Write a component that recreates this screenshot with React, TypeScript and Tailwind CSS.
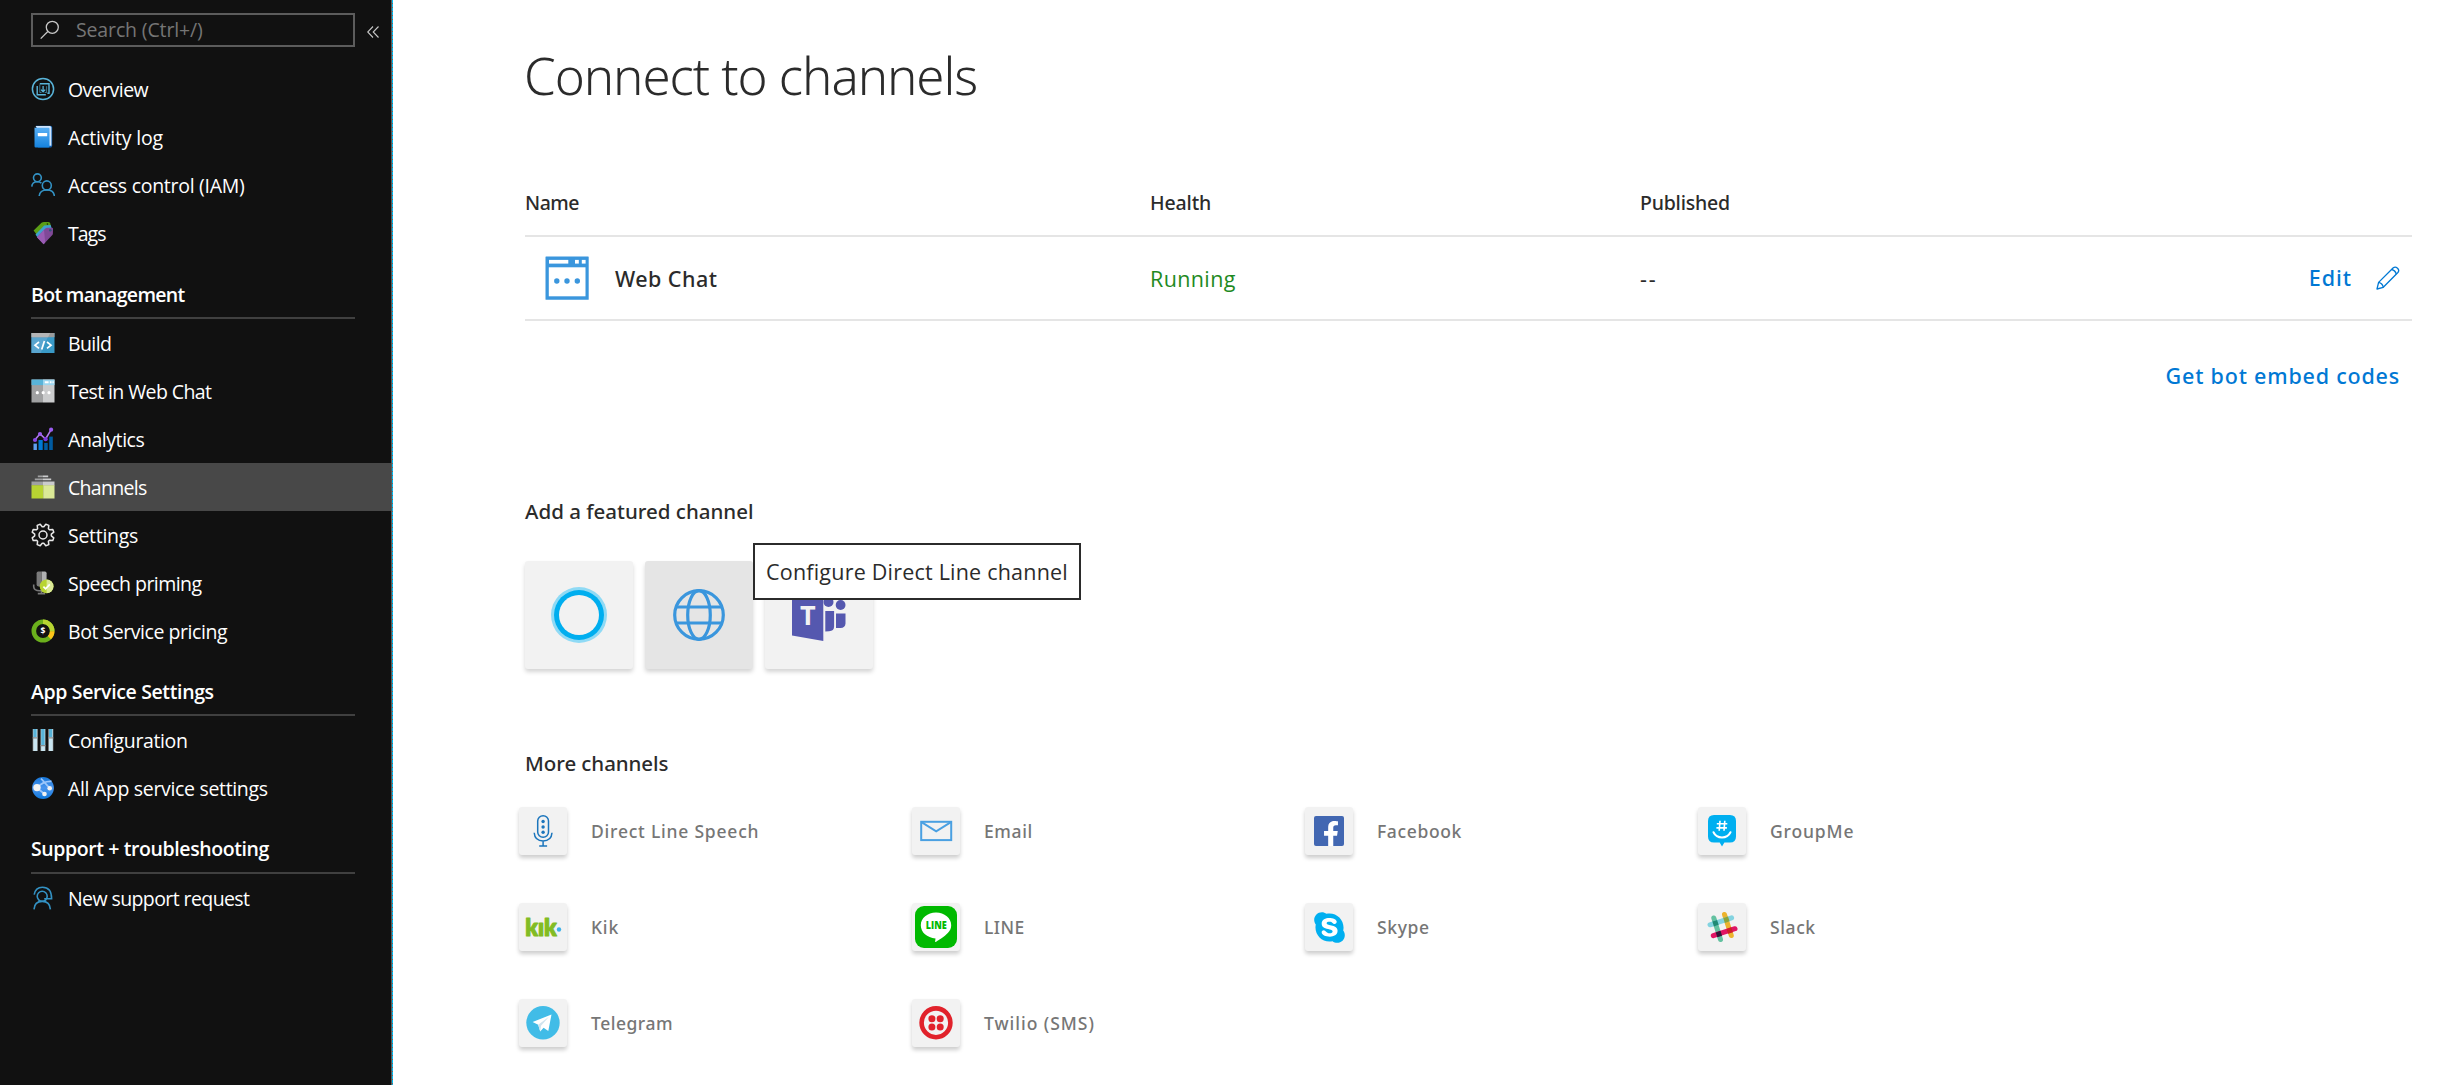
import type { ReactNode } from "react";
import { FaFacebookF, FaSkype } from "react-icons/fa";

type NavEntry = { label: string; tracking: string; icon: ReactNode; active?: boolean };
type Channel = { label: string; tracking: string; icon: ReactNode };

/* ---------- sidebar icons, drawn on a 24 unit grid ---------- */

const OverviewIcon = () => (
  <svg viewBox="0 0 24 24" className="size-6" fill="none" stroke="#59b4d9">
    <circle cx="12" cy="12" r="10.6" strokeWidth="1.5" />
    <path d="M8.8 6.8H18v9.4h-1.6M6.2 9v8.7h8.6" strokeWidth="1.4" />
    <path d="M8.8 7.5v8h1.7M13.7 15.5h1.9V9.2" strokeWidth="1" opacity=".6" />
    <path d="M12.1 9v5.6M10 12.6l2.1 2.2 2.1-2.2" strokeWidth="1.3" />
  </svg>
);

const ActivityIcon = () => (
  <svg viewBox="0 0 24 24" className="size-6">
    <defs>
      <linearGradient id="book" x1="0" y1="0" x2="0" y2="1">
        <stop offset="0" stopColor="#5ab0f5" />
        <stop offset="1" stopColor="#1583de" />
      </linearGradient>
    </defs>
    <path d="M5 .8h14.5q1.7 0 1.7 1.6v17.8q0 1.4-1 2.2H7z" fill="#0f5fb0" />
    <path d="M4.5 1h14.3q1.6 0 1.6 1.5v18.3H18L6 3z" fill="#cfe3fb" />
    <path d="M3.5 2.4Q4 2.8 5 2.8h12.4q1.1 0 1.1 1v17.4q0 1.2-1.1 1.2H4.7q-1.2 0-1.2-1.2z" fill="url(#book)" />
    <rect x="6.8" y="8" width="9.4" height="3.2" rx=".4" fill="#fff" />
  </svg>
);

const AccessIcon = () => (
  <svg viewBox="0 0 24 24" className="size-6" fill="none" stroke="#3392c4" strokeWidth="1.6">
    <circle cx="6.4" cy="4.8" r="3.9" />
    <path d="M.8 13.6C1 10 3.2 8.7 6.4 8.7c1.7 0 3 .4 4 1.4" />
    <circle cx="15.8" cy="12.4" r="4.5" />
    <path d="M8.2 23c.4-4 3.3-6 7.6-6s7.2 2 7.6 6" />
  </svg>
);

const TagsIcon = () => (
  <svg viewBox="0 0 24 24" className="size-6">
    <path d="M2.6 9.6 10.500 1.800q1-.9 2.500-.9h4.500q1.600 0 1.800 1.500l.7 3L6.600 15z" fill="#5b9e16" />
    <path d="M4.5 13.4 13.2 4.6l6.400-.5 1.400 4L7.6 18z" fill="#3fa0cf" />
    <path d="M6 16.300 14.300 7.600q.8-.8 2-.8l4.700-.1q1 .1 1 1l-.1 4.700q0 1-.8 1.900l-8.500 8.900z" fill="#804998" />
    <path d="M6 16.300 13 9l1.200 12.600-1.600 1.600z" fill="#9a5cb4" />
    <circle cx="19.300" cy="9.200" r="1.300" fill="#31547a" />
    <circle cx="16.400" cy="3.100" r=".8" fill="#1a3506" />
  </svg>
);

const BuildIcon = () => (
  <svg viewBox="0 0 24 24" className="size-6">
    <rect x=".5" y="2" width="23" height="20" fill="#3999c6" />
    <path d="M.5 6.2h16.3L9.7 22H.5z" fill="#59a5cf" />
    <rect x=".5" y="2" width="23" height="4.2" fill="#9a9b9c" />
    <path d="M.5 2h18.6l-2 4.2H.5z" fill="#b4b5b6" />
    <path d="M8 11l-4 3.2 4 3.2M16 11l4 3.2-4 3.2M13.4 10l-2.7 8.4" fill="none" stroke="#fff" strokeWidth="1.7" />
  </svg>
);

const WebTestIcon = () => (
  <svg viewBox="0 0 24 24" className="size-6">
    <rect x=".5" y=".5" width="11.5" height="23" fill="#a0a1a2" />
    <rect x="12" y=".5" width="11.5" height="23" fill="#cbcccd" />
    <rect x=".5" y=".5" width="11.5" height="5.6" fill="#59b4d9" />
    <rect x="12" y=".5" width="11.5" height="5.6" fill="#9bd6ef" />
    <path d="M13.8 3.3h3.8M18.8 3.3h1.7M21.5 3.3h1.2" stroke="#fff" strokeWidth="1.9" />
    <circle cx="6.3" cy="13.7" r="1.6" fill="#fff" />
    <circle cx="12.2" cy="13.7" r="1.6" fill="#fff" />
    <circle cx="18" cy="13.7" r="1.6" fill="#fff" />
  </svg>
);

const AnalyticsIcon = () => (
  <svg viewBox="0 0 24 24" className="size-6">
    <rect x="2.5" y="16.6" width="3.4" height="6.4" fill="#5ea0ef" />
    <rect x="7.5" y="13" width="4.2" height="10" fill="#0078d4" />
    <rect x="13.2" y="16" width="3.5" height="7" fill="#005ba1" />
    <rect x="18.2" y="9.6" width="3.6" height="13.4" fill="#005ba1" />
    <path d="M3.8 13 9 6.8l5.6 5.2L20 2.8" fill="none" stroke="#b27ceb" strokeWidth="1.6" />
    <circle cx="4" cy="13" r="2.1" fill="#8a48e8" />
    <circle cx="9" cy="7" r="2.1" fill="#9a5cf0" />
    <circle cx="14.6" cy="12.2" r="2.1" fill="#7b35e0" />
    <circle cx="20.1" cy="2.7" r="2.1" fill="#9a5cf0" />
  </svg>
);

const ChannelsIcon = () => (
  <svg viewBox="0 0 24 24" className="size-6">
    <path d="M6.8.4H12v1.8H6.8zM3.8 3.4H12v1.9H3.8zM.5 6.6H12v4H.5z" fill="#a0a1a2" />
    <path d="M12 .4h5.2v1.8H12zM12 3.4h8.2v1.9H12zM12 6.6h11.5v4H12z" fill="#cbcccd" />
    <rect x=".5" y="10.2" width="11.7" height="13.3" fill="#b8d432" />
    <rect x="12.2" y="10.2" width="11.3" height="13.3" fill="#dbe996" />
  </svg>
);

const SettingsIcon = () => (
  <svg viewBox="0 0 24 24" className="size-6" fill="none" stroke="#e8e8e8" strokeWidth="1.5" strokeLinejoin="round">
    <path d="M9.2 1.2l2 2.6h1.6l2-2.6 3 1.2-.4 3.3 1.1 1.1 3.3-.4 1 2.8-2.5 2v1.6l2.5 2-1 2.8-3.3-.4-1.1 1.1.4 3.3-3 1.2-2-2.6h-1.6l-2 2.6-3-1.2.4-3.3-1.1-1.1-3.3.4-1-2.8 2.5-2v-1.6l-2.5-2 1-2.8 3.3.4 1.1-1.1-.4-3.3z" />
    <circle cx="12" cy="12" r="4" />
  </svg>
);

const SpeechIcon = () => (
  <svg viewBox="0 0 24 24" className="size-6">
    <path d="M5.6 2.2Q5.6.6 7.2.6h3.6v15H7.6q-2 0-2-2z" fill="#7a7a7a" />
    <path d="M10.8.6H14q1.6 0 1.6 1.6V15h-4.8z" fill="#b0b1b2" />
    <path d="M2.7 13.4v2.3q.3 4 6 4h3M10.5 19.5V23M6.8 22.6h7.4" fill="none" stroke="#7a7a7a" strokeWidth="1.6" />
    <circle cx="15.6" cy="15.4" r="6.9" fill="#b8d432" />
    <path d="M15.6 8.5a6.9 6.9 0 0 1 0 13.8z" fill="#dbe996" />
    <path d="M12.4 15.6l2.2 2.2 4.2-4.4" fill="none" stroke="#fff" strokeWidth="1.7" />
  </svg>
);

const PricingIcon = () => (
  <svg viewBox="0 0 24 24" className="size-6">
    <circle cx="12" cy="12" r="9.2" fill="none" stroke="#6bb01c" strokeWidth="4.6" />
    <path d="M12 2.8a9.2 9.2 0 0 1 9.2 9.4" fill="none" stroke="#b8d432" strokeWidth="4.6" />
    <path d="M21.2 12.2a9.2 9.2 0 0 1-2.8 6.4" fill="none" stroke="#fcc419" strokeWidth="4.6" />
    <text x="12" y="15.2" textAnchor="middle" fontSize="8.5" fontWeight="700" fontFamily="Open Sans" fill="#fff">$</text>
  </svg>
);

const ConfigIcon = () => (
  <svg viewBox="0 0 24 24" className="size-6">
    <path d="M1.7 1h5v22h-5zM9.5 1h5v22h-5zM17.3 1h5v22h-5z" fill="#a0a1a2" />
    <path d="M2.4 1h3.7v22H2.4zM10.2 1h3.7v22h-3.7zM18 1h3.7v22H18z" fill="#c9e6f2" />
    <path d="M2.4 1h3.2v8H2.4zM10.2 1h3.4v16h-3.4zM18 1h3.2v8H18z" fill="#59b4d9" />
    <path d="M1.7 9.8h5M9.5 17.7h5M17.3 9.8h5" stroke="#8c8d8e" strokeWidth="1.2" />
  </svg>
);

const GlobeNodesIcon = () => (
  <svg viewBox="0 0 24 24" className="size-6">
    <defs>
      <linearGradient id="globe" x1="0" y1="0" x2="0" y2="1">
        <stop offset="0" stopColor="#1676d8" />
        <stop offset=".5" stopColor="#4a95ee" />
        <stop offset="1" stopColor="#0f78dc" />
      </linearGradient>
    </defs>
    <circle cx="12" cy="12" r="10.9" fill="url(#globe)" />
    <path d="M6.5 11.5Q12 5 20.5 5.4M10 2.5l8.4 9.3M6 12l7.6 6" fill="none" stroke="#9cc6fa" strokeWidth="1.8" />
    <circle cx="6" cy="11.6" r="3.7" fill="#f2f2f2" />
    <circle cx="18.7" cy="12.3" r="2.3" fill="#f2f2f2" />
    <circle cx="13.5" cy="18" r="2.3" fill="#f2f2f2" />
  </svg>
);

const SupportIcon = () => (
  <svg viewBox="0 0 24 24" className="size-6" fill="none" stroke="#3392c4" strokeWidth="1.6">
    <circle cx="11.2" cy="10.3" r="5" />
    <path d="M3.2 8.6C4 3.8 7 1.2 11.4 1.2c5.6 0 9.2 4 9.2 11.5h-7.4" />
    <path d="M3 23.4c.3-4.900 3.300-8 8.200-8s7.900 3.100 8.200 8" />
  </svg>
);

/* ---------- channel icons ---------- */

const WebChatIcon = () => (
  <svg viewBox="0 0 44 44" className="size-11">
    <rect x=".5" y=".5" width="43.200" height="43.200" rx=".5" fill="#3a96dd" />
    <rect x="4" y="3.900" width="19.300" height="3.700" fill="#fff" />
    <rect x="30" y="3.900" width="3.800" height="3.700" fill="#fff" />
    <rect x="36.800" y="3.900" width="3.800" height="3.700" fill="#fff" />
    <rect x="3.800" y="11.300" width="36.700" height="29" fill="#fff" />
    <circle cx="11.800" cy="25" r="2.700" fill="#3a96dd" />
    <circle cx="22" cy="25" r="2.700" fill="#3a96dd" />
    <circle cx="32.300" cy="25" r="2.700" fill="#3a96dd" />
  </svg>
);

const PencilIcon = () => (
  <svg viewBox="0 0 24 24" className="size-6" fill="none" stroke="#0078d4" strokeWidth="1.3" strokeLinejoin="round">
    <path d="M1 23l1.600-6.600L17.300 1.800q2-1.600 4.200.4t.4 4.300L7.300 21.300z" />
    <path d="M2.600 16.400q3.800.8 4.700 4.900M15.600 3.500q3.800.8 4.700 4.700" />
  </svg>
);

const CortanaIcon = () => (
  <svg viewBox="0 0 56 56" className="size-14">
    <circle cx="28" cy="28" r="28" fill="#8fdaf5" />
    <circle cx="28" cy="28" r="25" fill="#00aeef" />
    <circle cx="28" cy="28" r="20" fill="#f2f2f2" />
  </svg>
);

const DirectLineIcon = () => (
  <svg viewBox="0 0 52 52" className="size-[52px]" fill="none" stroke="#3a96dd" strokeWidth="3.2">
    <circle cx="26" cy="26" r="24.3" />
    <ellipse cx="26" cy="26" rx="11.3" ry="24.3" />
    <path d="M3.500 18h45M3.500 34h45" />
  </svg>
);

const TeamsIcon = () => (
  <svg viewBox="0 0 54 52" className="h-[52px] w-[54px]" fill="#5558af">
    <path d="M0 5.500 31.300 0v52L0 46.500z" />
    <circle cx="36.500" cy="13" r="5" />
    <circle cx="48.600" cy="16" r="4.900" />
    <path d="M33.300 22h8.800v15.500q0 4.500-5 4.700l-3.800.3zM44 24.500h9.500v10q-.3 4.300-5 4.500H44z" />
    <text x="15.700" y="35.600" textAnchor="middle" fontFamily="Open Sans" fontWeight="700" fontSize="27" fill="#f2f2f2">T</text>
  </svg>
);

const MicIcon = () => (
  <svg viewBox="0 0 48 48" className="size-12" fill="none" stroke="#1b75bc" strokeWidth="1.5">
    <rect x="18.700" y="8.700" width="10.800" height="21.600" rx="5.400" />
    <path d="M15.200 25.800q.6 8.200 8.900 8.200t8.900-8.200M24.100 34v5M20.200 39.100h7.900" />
    <g fill="#1b75bc" stroke="none">
      <circle cx="24.100" cy="14.500" r="1.700" />
      <circle cx="24.100" cy="20" r="1.700" />
      <circle cx="24.100" cy="25.300" r="1.700" />
    </g>
  </svg>
);

const EmailIcon = () => (
  <svg viewBox="0 0 48 48" className="size-12" fill="none" stroke="#4aa0e2" strokeWidth="2">
    <rect x="9.200" y="14.800" width="30" height="18.300" />
    <path d="M9.500 15.200l14.700 9.200 14.700-9.200" />
  </svg>
);

const FacebookIcon = () => (
  <span className="relative block size-[30px] overflow-hidden rounded-[2px] bg-[#4267b2]">
    <FaFacebookF className="absolute right-0 bottom-[-1px] size-[26px] text-white" />
  </span>
);

const GroupMeIcon = () => (
  <svg viewBox="0 0 48 48" className="size-12">
    <path d="M16 8h16q6 0 6 6v15.500q0 6-6 6h-5.600L24 39.500l-2.300-4H16q-6 0-6-6V14q0-6 6-6z" fill="#00aff0" />
    <path d="M22 13.700l-.8 10M26.800 13.700l-.8 10M18.800 16.700h10.500M18.400 20.900h10.500" stroke="#fff" strokeWidth="1.6" />
    <path d="M15.500 25.200q2.500 5.200 8.500 5.200t8.500-5.200" fill="none" stroke="#fff" strokeWidth="2" strokeLinecap="round" />
  </svg>
);

const KikIcon = () => (
  <svg viewBox="0 0 48 48" className="size-12">
    <text x="6.200" y="33.200" textLength="31.500" lengthAdjust="spacingAndGlyphs" fontFamily="Lato" fontWeight="800" fontSize="23.500" fill="#82bc23" stroke="#82bc23" strokeWidth="1" strokeLinejoin="round">kık</text>
    <circle cx="40" cy="26.500" r="2.200" fill="#3eb1e8" />
  </svg>
);

const LineIcon = () => (
  <svg viewBox="0 0 48 48" className="size-12">
    <rect x="3" y="3" width="42" height="42" rx="9" fill="#00b900" />
    <path d="M24 9.600c8.500 0 15.200 5.600 15.200 12.600 0 3-1.200 5.600-3.400 7.900-3.200 3.600-9.600 7.500-11.600 8.600-1 .5-1.100 0-1-.8l.3-2.500c-8.400-.7-14.700-6-14.700-13.200 0-7 6.700-12.600 15.200-12.600z" fill="#fff" />
    <text x="24.200" y="26.200" textAnchor="middle" textLength="21" lengthAdjust="spacingAndGlyphs" fontFamily="Open Sans" fontWeight="800" fontSize="10" fill="#00b900">LINE</text>
  </svg>
);

const SkypeIcon = () => (
  <span className="flex size-[26px] items-center justify-center rounded-full bg-white">
    <FaSkype className="size-[35px] shrink-0 text-[#00aff0]" />
  </span>
);

const SlackIcon = () => (
  <svg viewBox="0 0 48 48" className="size-12" fill="none" strokeWidth="5" strokeLinecap="round">
    <path d="M26.500 11.500l6.800 21" stroke="#ecb32d" />
    <path d="M15.800 15l6.700 21.500" stroke="#63c1a0" />
    <path d="M12 21.800l21.600-7" stroke="#83d3e0" />
    <path d="M15.300 32.700l21.700-7" stroke="#e01563" />
    <g strokeLinecap="butt">
      <path d="M16.700 17.700l1.600 4.900" stroke="#1f8a74" />
      <path d="M27.600 14.200l1.600 4.900" stroke="#8aa33a" />
      <path d="M20.100 28.600l1.600 4.900" stroke="#33183a" />
      <path d="M30.900 25.100l1.600 4.900" stroke="#cc2027" />
    </g>
  </svg>
);

const TelegramIcon = () => (
  <svg viewBox="0 0 48 48" className="size-12">
    <circle cx="24" cy="23.800" r="16.700" fill="#41bce7" />
    <path d="M32.500 15.500 13.600 23l5.600 2.800 2 6.700 3.400-3.700 4.700 3.200z" fill="#fff" />
    <path d="M19.200 25.800 30 17.800l-8 9-.8 5.700z" fill="#cfe3ee" />
  </svg>
);

const TwilioIcon = () => (
  <svg viewBox="0 0 48 48" className="size-12" fill="#e1222b">
    <circle cx="24" cy="23.800" r="14.400" fill="none" stroke="#e1222b" strokeWidth="4.600" />
    <circle cx="19.900" cy="19.700" r="3.500" />
    <circle cx="28.200" cy="19.700" r="3.500" />
    <circle cx="19.900" cy="28" r="3.500" />
    <circle cx="28.200" cy="28" r="3.500" />
  </svg>
);

/* ---------- data ---------- */

const general: NavEntry[] = [
  { label: "Overview", tracking: "tracking-[-0.56px]", icon: <OverviewIcon /> },
  { label: "Activity log", tracking: "tracking-[-0.2px]", icon: <ActivityIcon /> },
  { label: "Access control (IAM)", tracking: "tracking-[-0.28px]", icon: <AccessIcon /> },
  { label: "Tags", tracking: "tracking-[-1px]", icon: <TagsIcon /> },
];

const botManagement: NavEntry[] = [
  { label: "Build", tracking: "tracking-[-0.6px]", icon: <BuildIcon /> },
  { label: "Test in Web Chat", tracking: "tracking-[-0.6px]", icon: <WebTestIcon /> },
  { label: "Analytics", tracking: "tracking-[-0.44px]", icon: <AnalyticsIcon /> },
  { label: "Channels", tracking: "tracking-[-0.7px]", icon: <ChannelsIcon />, active: true },
  { label: "Settings", tracking: "tracking-[-0.29px]", icon: <SettingsIcon /> },
  { label: "Speech priming", tracking: "tracking-[-0.55px]", icon: <SpeechIcon /> },
  { label: "Bot Service pricing", tracking: "tracking-[-0.45px]", icon: <PricingIcon /> },
];

const appService: NavEntry[] = [
  { label: "Configuration", tracking: "tracking-[-0.37px]", icon: <ConfigIcon /> },
  { label: "All App service settings", tracking: "tracking-[-0.33px]", icon: <GlobeNodesIcon /> },
];

const support: NavEntry[] = [
  { label: "New support request", tracking: "tracking-[-0.59px]", icon: <SupportIcon /> },
];

const channels: Channel[] = [
  { label: "Direct Line Speech", tracking: "tracking-[0.78px]", icon: <MicIcon /> },
  { label: "Email", tracking: "tracking-[0.61px]", icon: <EmailIcon /> },
  { label: "Facebook", tracking: "tracking-[0.63px]", icon: <FacebookIcon /> },
  { label: "GroupMe", tracking: "tracking-[0.85px]", icon: <GroupMeIcon /> },
  { label: "Kik", tracking: "tracking-[0.8px]", icon: <KikIcon /> },
  { label: "LINE", tracking: "tracking-[0.5px]", icon: <LineIcon /> },
  { label: "Skype", tracking: "tracking-[0.63px]", icon: <SkypeIcon /> },
  { label: "Slack", tracking: "tracking-[0.6px]", icon: <SlackIcon /> },
  { label: "Telegram", tracking: "tracking-[0.52px]", icon: <TelegramIcon /> },
  { label: "Twilio (SMS)", tracking: "tracking-[0.97px]", icon: <TwilioIcon /> },
];

/* ---------- pieces ---------- */

function NavList({ entries }: { entries: NavEntry[] }) {
  return (
    <ul>
      {entries.map((e) => (
        <li key={e.label} className={`flex h-12 items-center gap-[13px] pl-[31px] ${e.active ? "bg-[#484848]" : ""}`}>
          <span className="flex size-6 shrink-0 items-center justify-center">{e.icon}</span>
          <span className={`pt-0.5 text-[19.5px] whitespace-nowrap text-white ${e.tracking}`}>{e.label}</span>
        </li>
      ))}
    </ul>
  );
}

function NavHeading({ label, className }: { label: string; className: string }) {
  return (
    <h2 className={`mr-[36px] ml-[31px] border-b-2 border-[#404040] text-[19.5px] font-semibold whitespace-nowrap text-white ${className}`}>
      {label}
    </h2>
  );
}

function Sidebar() {
  return (
    <aside className="flex h-full w-[393px] shrink-0 font-['Open_Sans',sans-serif]">
      <div className="w-[391px] bg-[#111111]">
        <div className="flex items-center pt-[13px] pl-[31px]">
          <div className="flex h-[34px] w-[324px] items-center border-2 border-[#5c5c5c] pl-[7px]">
            <svg viewBox="0 0 20 20" className="size-5" fill="none" stroke="#c8c8c8" strokeWidth="1.300">
              <circle cx="12.300" cy="7.300" r="6" />
              <path d="M7.800 11.500.700 18.600" />
            </svg>
            <span className="pl-4 text-[19.5px] leading-[26px] tracking-[-0.14px] text-[#757575]">Search (Ctrl+/)</span>
          </div>
          <svg viewBox="0 0 12 12" className="mt-1 ml-3 size-3" fill="none" stroke="#c8c8c8" strokeWidth="1.100">
            <path d="M6 .5.700 6 6 11.500M11.500.5 6.200 6l5.300 5.500" />
          </svg>
        </div>
        <nav className="pt-[18px]">
          <NavList entries={general} />
          <NavHeading label="Bot management" className="h-[62px] pt-[2px] leading-[71px] tracking-[-0.68px]" />
          <NavList entries={botManagement} />
          <NavHeading label="App Service Settings" className="h-[61px] pt-[2px] leading-[70px] tracking-[-0.36px]" />
          <NavList entries={appService} />
          <NavHeading label="Support + troubleshooting" className="h-[62px] pt-[2px] leading-[70px] tracking-[-0.4px]" />
          <NavList entries={support} />
        </nav>
      </div>
      <div className="w-px bg-[#5a5a5a]" />
      <div className="w-px bg-[repeating-linear-gradient(to_bottom,#00bcf2_0_3px,#6b6b6b_3px_4px)]" />
    </aside>
  );
}

function Tile({ active, children }: { active?: boolean; children: ReactNode }) {
  return (
    <div className={`relative flex size-[108px] items-center justify-center rounded-[3px] shadow-[0_3px_4px_rgba(0,0,0,0.17)] ${active ? "bg-[#e5e5e5]" : "bg-[#f2f2f2]"}`}>
      {children}
    </div>
  );
}

export default function App() {
  return (
    <div className="flex h-[1085px] w-[2438px] overflow-hidden bg-white text-[#2b2b2b]">
      <Sidebar />
      <main className="flex-1 pt-6 pr-[26px] pl-[132px] font-['Noto_Sans',sans-serif] font-medium">
        <h1 className="-ml-px h-[100px] pt-px text-[51px] leading-[100px] font-light tracking-[-1.05px]">Connect to channels</h1>

        <div className="mt-[47px] grid h-[66px] grid-cols-[625px_490px_1fr] items-center border-b-2 border-[#e5e5e5] text-[19.5px]">
          <span className="tracking-[-0.5px]">Name</span>
          <span className="tracking-[-0.13px]">Health</span>
          <span className="tracking-[-0.2px]">Published</span>
        </div>
        <div className="grid h-[84px] grid-cols-[625px_490px_1fr] items-center border-b-2 border-[#e5e5e5] text-[21.5px]">
          <div className="flex items-center gap-[26px] pl-5">
            <WebChatIcon />
            <span className="pt-0.5 tracking-[0.45px]">Web Chat</span>
          </div>
          <span className="pt-0.5 font-['Open_Sans'] font-normal tracking-[0.38px] text-[#1f8a1f]">Running</span>
          <div className="flex items-center justify-between pr-3">
            <span className="pt-0.5 font-normal tracking-[1.8px]">--</span>
            <a className="flex items-center gap-[24px] text-[#0078d4]">
              <span className="tracking-[0.96px]">Edit</span>
              <PencilIcon />
            </a>
          </div>
        </div>
        <div className="mt-10 flex h-[30px] items-center justify-end pr-3 text-[21.5px] tracking-[0.8px] text-[#0078d4]">
          <a>Get bot embed codes</a>
        </div>

        <h3 className="mt-[105px] flex h-[30px] items-center text-[20.5px]">Add a featured channel</h3>
        <div className="mt-[35px] flex gap-3">
          <Tile><CortanaIcon /></Tile>
          <Tile active>
            <DirectLineIcon />
            <div className="absolute -top-[18px] left-[108px] z-10 flex h-[57px] w-[328px] items-center border-2 border-[#2b2b2b] bg-white pt-0.5 pl-[11px] font-['Open_Sans'] text-[21.5px] font-normal tracking-[0.21px] whitespace-nowrap">
              Configure Direct Line channel
            </div>
          </Tile>
          <Tile><TeamsIcon /></Tile>
        </div>

        <h3 className="mt-[79px] flex h-[30px] items-center text-[20.5px] tracking-[-0.07px]">More channels</h3>
        <div className="mt-[29px] -ml-1.5 grid grid-cols-[repeat(4,393px)] gap-y-12">
          {channels.map((c) => (
            <div key={c.label} className="flex items-center gap-6">
              <span className="flex size-12 shrink-0 items-center justify-center rounded-[3px] bg-[#f2f2f2] shadow-[0_3px_4px_rgba(0,0,0,0.2)]">
                {c.icon}
              </span>
              <span className={`text-[17.5px] leading-6 text-[#767676] ${c.tracking}`}>{c.label}</span>
            </div>
          ))}
        </div>
      </main>
    </div>
  );
}
